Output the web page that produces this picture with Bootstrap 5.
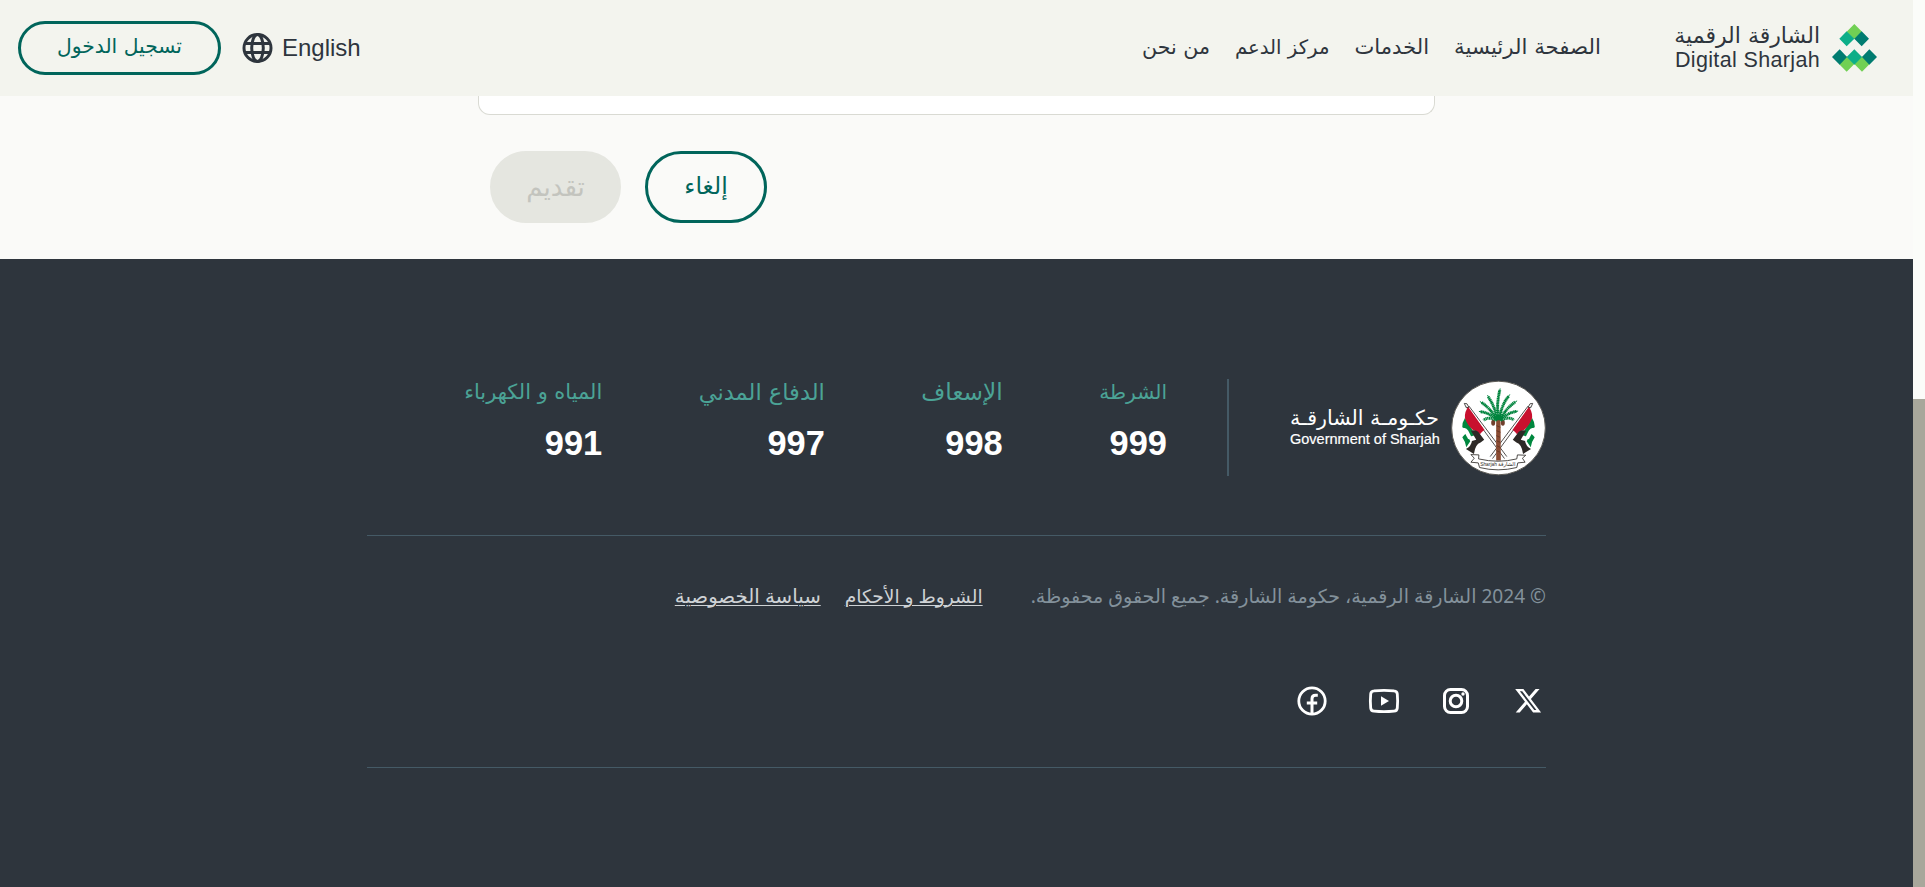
<!DOCTYPE html>
<html dir="rtl" lang="ar">
<head>
<meta charset="utf-8">
<meta name="viewport" content="width=device-width, initial-scale=1">
<title>الشارقة الرقمية</title>
<link href="https://cdn.jsdelivr.net/npm/bootstrap@5.3.0/dist/css/bootstrap.min.css" rel="stylesheet">
<style>
  :root { --ink:#2e353d; --brand:#00655b; --rule:#455a66; }
  body { font-family:"Liberation Sans","DejaVu Sans",sans-serif; color:var(--ink); background:#fafaf8; height:100vh; overflow:hidden; }
  .ar { font-family:"DejaVu Sans",sans-serif; white-space:nowrap; line-height:1.5; }
  .scroll-track { width:12px; background:#fbfcf9; padding-top:399px; }
  .scroll-thumb { background:#a8a79b; }
  .topbar { height:96px; background:#f3f4ee; padding-inline:35px 18px; }
  .brand-text { width:146px; }
  .brand-text .ar { font-size:22px; line-height:25px; }
  .brand-latin { font-size:21.5px; line-height:25px; letter-spacing:.35px; white-space:nowrap; direction:ltr; text-align:right; }
  .main-links { gap:25px; margin-inline-start:73px; padding-bottom:3px; }
  .main-links a { color:var(--ink); text-decoration:none; }
  .lang { font-size:24px; gap:9px; direction:ltr; line-height:1; color:var(--ink); }
  .pill { border:3px solid var(--brand); color:var(--brand); border-radius:36px; background:none; padding:0; }
  .pill-login { width:203px; height:54px; font-size:20.3px; margin-inline-start:21px; padding-bottom:3px; }
  .pill-cancel { width:122px; height:72px; font-size:23.6px; padding-bottom:1px; }
  .pill-submit { width:131px; height:72px; font-size:26px; background:#e5e6e0; border-color:#e5e6e0; color:#c3c4be; padding-bottom:0; }
  .form-area { height:163px; }
  .form-end { width:957px; height:19px; background:#fff; border:1px solid #d9dad3; border-top:0; border-radius:0 0 12px 12px; }
  .form-actions { width:957px; margin-top:36px; gap:24px; padding-inline-end:12px; }
  .site-footer { background:var(--ink); padding-top:120px; }
  .foot-inner { width:1179px; }
  .foot-top { height:157px; border-bottom:1px solid var(--rule); }
  .gov { height:97px; padding-inline-end:61px; border-inline-end:2px solid var(--rule); gap:12px; }
  .gov-text { width:149px; color:#fff; }
  .gov-text .ar { font-size:20.6px; line-height:22px; }
  .gov-latin { font-size:14.5px; line-height:20px; direction:ltr; text-align:right; white-space:nowrap; -webkit-text-stroke:.2px #fff; }
  .hotlines { gap:96.5px; margin-inline-start:60px; }
  .hotlines .ar { color:#4ba396; line-height:30px; height:30px; margin-top:-2px; }
  .hotlines strong { font-size:34.4px; line-height:40px; color:#fff; margin-top:16px; display:block; }
  .legal { height:119px; margin-bottom:4px; }
  .legal .ar { font-family:"Noto Sans","DejaVu Sans",sans-serif; line-height:28px; }
  .copy { color:#83919b; font-size:19.1px; }
  .legal a { color:#ced2d5; text-decoration:underline; text-underline-offset:2px; text-decoration-thickness:1px; }
  .social { gap:36px; height:109px; padding-top:24px; border-bottom:1px solid var(--rule); }
  .social svg { width:36px; height:36px; display:block; }
</style>
</head>
<body>
<div class="d-flex h-100">
  <div class="scroll-track d-flex flex-shrink-0"><div class="scroll-thumb w-100"></div></div>
  <div class="flex-grow-1 d-flex flex-column">
    <header class="topbar d-flex align-items-center flex-shrink-0">
      <div class="d-flex align-items-center" style="gap:12px">
        <svg width="46" height="48" viewBox="0 0 138 144">
          <g transform="translate(-576,-71)">
            <path fill="#71d054" d="M643 71l23 23-23 23-23-23zM620 168l23 23-23 23-23-23zM666 168l23 23-23 23-23-23z"/>
            <path fill="#0cae88" d="M620 93l23 22-23 23-22-23zM643 147l23 23-23 23-23-23z"/>
            <path fill="#007c70" d="M665 93l22 22-22 23-22-23zM599 147l22 23-22 23-23-23zM688 147l23 23-23 23-22-23z"/>
          </g>
        </svg>
        <div class="brand-text"><div class="ar">الشارقة الرقمية</div><div class="brand-latin">Digital Sharjah</div></div>
      </div>
      <nav class="main-links d-flex align-items-baseline">
        <a class="ar" href="#" style="font-size:21.3px">الصفحة الرئيسية</a>
        <a class="ar" href="#" style="font-size:21.1px">الخدمات</a>
        <a class="ar" href="#" style="font-size:19.7px">مركز الدعم</a>
        <a class="ar" href="#" style="font-size:20.6px">من نحن</a>
      </nav>
      <div class="d-flex align-items-center me-auto ms-0">
        <div class="lang d-flex align-items-center">
          <svg width="31" height="30" viewBox="0 0 31 30" fill="none" stroke="#2e353d" stroke-width="3">
            <circle cx="15.5" cy="15" r="13.5"/><ellipse cx="15.5" cy="15" rx="5.8" ry="13.5"/><path d="M3 10.5h25M3 19.5h25"/>
          </svg>
          <span>English</span>
        </div>
        <button class="pill pill-login ar">تسجيل الدخول</button>
      </div>
    </header>
    <main class="form-area d-flex flex-column align-items-center flex-shrink-0">
      <div class="form-end"></div>
      <div class="form-actions d-flex justify-content-end">
        <button class="pill pill-cancel ar">إلغاء</button>
        <button class="pill pill-submit ar" disabled>تقديم</button>
      </div>
    </main>
    <footer class="site-footer flex-grow-1">
      <div class="foot-inner mx-auto">
        <div class="foot-top d-flex align-items-start">
          <div class="gov d-flex align-items-center">
            <svg width="95" height="96" viewBox="32 28 286 288">
              <circle cx="175" cy="172" r="141" fill="#fff" stroke="#5c5a55" stroke-width="3"/>
              <g id="flagside">
                <path d="M72 98l8 1 6 11-8 1zM79 108L193 264M86 106L200 258" fill="none" stroke="#2f2d2b" stroke-width="2.5"/>
                <path fill="#00873e" d="M74 142q-9 14-8 28l10 5 10 24 20-6-8-12-13-22zM66 200q6-7 12-12l12 24-12 18q-3-18-12-30z"/>
                <path fill="#fff" d="M70 172q8-2 14 8l10 20-10 6-10-18z"/>
                <path fill="#c8102e" d="M84 109q-12 14-10 34 8 22 23 34 14 4 22 14 10-12 14-13z"/>
                <path fill="#2d2926" d="M92 180q13-3 22 3l18 24-11 9q-16 5-20 34l-24-15q16-8 18-24l13-4z"/>
              </g>
              <use href="#flagside" transform="translate(350,0) scale(-1,1)"/>
              <path fill="#8a4b32" d="M168 140h13l1 130h-14z"/>
              <path d="M169 165l12 5M169 180l12 5M168 195l12 5M168 210l12 5M168 225l12 5M168 240l12 5" stroke="#5b3020" stroke-width="2"/>
              <ellipse cx="159" cy="156" rx="6" ry="9" fill="#71402d"/><ellipse cx="188" cy="156" rx="6" ry="9" fill="#71402d"/>
              <g fill="none" stroke="#00843d">
                <path stroke-width="9" stroke-dasharray="4 1.2" d="M175 148Q168 100 179 58M173 148Q164 108 144 78M178 148Q182 104 206 76M172 148Q152 114 124 95M179 148Q198 112 226 93M171 149Q146 124 120 123M180 149Q205 124 230 122M170 149Q144 136 130 149M181 149Q207 136 221 148"/>
                <path stroke-width="3" d="M175 148Q168 100 180 53M173 148Q164 108 142 73M178 148Q182 104 209 71M172 148Q152 114 119 92M179 148Q198 112 231 90M171 149Q146 124 116 122M180 149Q205 124 234 121"/>
                <path stroke-width="12" d="M163 144q12-10 25 0"/>
              </g>
              <path d="M115 265q60 14 115 0l2-12 25 1-10 9 8 12-22 2-3 14q-56 14-112 0l-4-14-22-2 10-12-10-11 24 1z" fill="#fff" stroke="#2d2926" stroke-width="2.5"/>
              <text x="120" y="287" font-size="16" font-family="Liberation Sans" fill="#2d2926" direction="ltr" textLength="50" lengthAdjust="spacingAndGlyphs">Sharjah</text>
              <text x="226" y="286" font-size="16" font-family="DejaVu Sans" fill="#2d2926" direction="rtl">الشارقة</text>
            </svg>
            <div class="gov-text"><div class="ar">حكـومـة الشارقـة</div><div class="gov-latin">Government of Sharjah</div></div>
          </div>
          <div class="hotlines d-flex">
            <div><div class="ar" style="font-size:20.2px">الشرطة</div><strong>999</strong></div>
            <div><div class="ar" style="font-size:23.2px">الإسعاف</div><strong>998</strong></div>
            <div><div class="ar" style="font-size:22.5px">الدفاع المدني</div><strong>997</strong></div>
            <div><div class="ar" style="font-size:20.9px">المياه و الكهرباء</div><strong>991</strong></div>
          </div>
        </div>
        <div class="legal d-flex align-items-center">
          <span class="copy ar">© 2024 الشارقة الرقمية، حكومة الشارقة. جميع الحقوق محفوظة.</span>
          <div class="d-flex align-items-baseline" style="gap:24px;margin-inline-start:48px">
            <a class="ar" href="#" style="font-size:18.7px">الشروط و الأحكام</a>
            <a class="ar" href="#" style="font-size:19.8px">سياسة الخصوصية</a>
          </div>
        </div>
        <div class="social d-flex">
          <svg viewBox="0 0 36 36" fill="#fff"><path transform="translate(5.2,4.8) scale(1.62)" d="M12.6.75h2.454l-5.36 6.142L16 15.25h-4.937l-3.867-5.07-4.425 5.07H.316l5.733-6.57L0 .75h5.063l3.495 4.633L12.601.75Zm-.86 13.028h1.36L4.323 2.145H2.865z"/></svg>
          <svg viewBox="0 0 36 36" fill="none" stroke="#fff" stroke-width="3"><rect x="6.5" y="6.5" width="23" height="23" rx="6"/><circle cx="18" cy="18" r="5.8"/><circle cx="25" cy="11" r="1.7" fill="#fff" stroke="none"/></svg>
          <svg viewBox="0 0 36 36" fill="none" stroke="#fff" stroke-width="2.8"><path d="M8 7.8Q18 6.8 28 7.8 31 8 31.3 11 32 18 31.3 25 31 28 28 28.2 18 29.2 8 28.2 5 28 4.7 25 4 18 4.7 11 5 8 8 7.8z"/><path d="M15 13.2v9.6l8-4.8z" fill="#fff" stroke="none"/></svg>
          <svg viewBox="0 0 36 36" fill="none" stroke="#fff" stroke-width="2.8"><circle cx="18" cy="18" r="13.2"/><path d="M18 31V15.8q0-3.6 3.6-3.6h2.2M12.8 20h10.4" stroke-width="3"/></svg>
        </div>
      </div>
    </footer>
  </div>
</div>
<script src="https://cdn.jsdelivr.net/npm/bootstrap@5.3.0/dist/js/bootstrap.bundle.min.js"></script>
</body>
</html>
